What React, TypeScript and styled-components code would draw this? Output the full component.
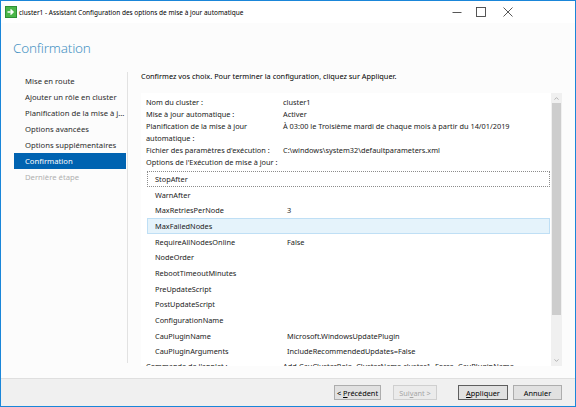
import React from 'react';
import styled, { createGlobalStyle } from 'styled-components';

const GlobalStyle = createGlobalStyle`
  html, body {
    margin: 0;
    padding: 0;
    width: 576px;
    height: 407px;
    overflow: hidden;
    background: #fff;
  }
  body {
    font-family: "Noto Sans", "Liberation Sans", sans-serif;
    font-size: 7.35px;
    color: #1a1a1a;
  }
`;

const Window = styled.div`
  width: 576px;
  height: 407px;
  box-sizing: border-box;
  border: 1px solid #1a86d9;
  background: #fcfcfc;
  display: flex;
  flex-direction: column;
`;

const TitleBar = styled.div`
  height: 22px;
  flex-shrink: 0;
  background: #fff;
  display: flex;
  align-items: center;
  padding-left: 4px;
`;

const TitleText = styled.span`
  margin-left: 2px;
  flex: 1;
  font-size: 6.5px;
  color: #000;
  white-space: nowrap;
`;

const WindowControls = styled.div`
  display: flex;
  height: 100%;
  margin-right: 55px;
`;

const ControlButton = styled.div<{ $gap?: number }>`
  width: 24px;
  height: 100%;
  margin-left: ${(p) => p.$gap ?? 0}px;
  display: flex;
  align-items: center;
  justify-content: center;
`;

const Header = styled.div`
  height: 44px;
  flex-shrink: 0;
  box-sizing: border-box;
  padding: 6px 0 0 12px;
  display: flex;
  align-items: center;
`;

const PageTitle = styled.h1`
  margin: 0;
  font-size: 13.5px;
  font-weight: 300;
  color: #4a94c4;
  letter-spacing: -0.2px;
`;

const Main = styled.div`
  flex: 1;
  display: flex;
  min-height: 0;
`;

const Nav = styled.nav`
  width: 127px;
  flex-shrink: 0;
  box-sizing: border-box;
  margin: 5px 0 15px 0;
  padding: 1px 0 0 13px;
  border-right: 1px solid #e2e2e2;
`;

const NavItem = styled.div<{ $state?: 'active' | 'disabled' }>`
  height: 16px;
  line-height: 16px;
  margin-right: 1px;
  padding-left: 11px;
  font-size: 7.7px;
  white-space: nowrap;
  overflow: hidden;
  text-overflow: ellipsis;
  background: ${(p) => (p.$state === 'active' ? '#0063b1' : 'transparent')};
  color: ${(p) =>
    p.$state === 'active' ? '#fff' : p.$state === 'disabled' ? '#b0b0b0' : '#2b2b2b'};
`;

const Content = styled.section`
  flex: 1;
  min-width: 0;
  display: flex;
  flex-direction: column;
  padding: 4px 13px 12px 13px;
`;

const Intro = styled.p`
  margin: 0;
  line-height: 10px;
  color: #000;
`;

const ListFrame = styled.div`
  flex: 1;
  min-height: 0;
  margin-top: 12px;
  display: flex;
  background: #fff;
`;

const ListScroll = styled.div`
  flex: 1;
  min-width: 0;
  overflow: hidden;
  padding: 3px 0 0 5px;
`;

const SummaryRow = styled.div<{ $gap?: number }>`
  display: flex;
  line-height: 12px;
  margin-top: ${(p) => p.$gap ?? 0}px;
  white-space: nowrap;
`;

const SummaryLabel = styled.div`
  width: 137px;
  flex-shrink: 0;
`;

const SummaryValue = styled.div`
  flex: 1;
  min-width: 0;
`;

const OptionsList = styled.div`
  margin: 3px 1px 0 1px;
  background: #fff;
`;

const OptionRow = styled.div<{ $variant?: 'focus' | 'selected' }>`
  height: 15.7px;
  box-sizing: border-box;
  display: flex;
  align-items: center;
  padding-left: 7px;
  white-space: nowrap;
  border: 1px ${(p) => (p.$variant === 'focus' ? 'dotted' : 'solid')};
  border-color: ${(p) =>
    p.$variant === 'focus' ? '#8c8c8c' : p.$variant === 'selected' ? '#bfdff5' : 'transparent'};
  background: ${(p) => (p.$variant === 'selected' ? '#e5f3fb' : 'transparent')};
`;

const OptionName = styled.div`
  width: 132px;
  flex-shrink: 0;
`;

const OptionValue = styled.div``;

const ScrollBar = styled.div`
  width: 11px;
  flex-shrink: 0;
  display: flex;
  flex-direction: column;
  background: #f0f0f0;
`;

const ScrollArrow = styled.div<{ $h: number }>`
  height: ${(p) => p.$h}px;
  flex-shrink: 0;
  display: flex;
  align-items: center;
  justify-content: center;
`;

const ScrollThumb = styled.div`
  height: 212px;
  flex-shrink: 0;
  margin: 0 1px;
  background: #cdcdcd;
`;

const ScrollTrack = styled.div`
  flex: 1;
`;

const Footer = styled.footer`
  height: 28px;
  flex-shrink: 0;
  box-sizing: border-box;
  border-top: 1px solid #dfdfdf;
  background: #f0f0f0;
  display: flex;
  justify-content: flex-end;
  align-items: flex-start;
  padding: 6px 13px 0 0;
`;

const Button = styled.button<{ $w: number; $gap: number; $default?: boolean }>`
  width: ${(p) => p.$w}px;
  height: 15px;
  margin-left: ${(p) => p.$gap}px;
  padding: 0;
  box-sizing: border-box;
  font-family: inherit;
  font-size: 7.35px;
  color: #000;
  background: #e1e1e1;
  border: 1px solid ${(p) => (p.$default ? '#5f5f5f' : '#adadad')};
  border-radius: 0;
  &:disabled {
    color: #a6a6a6;
    background: #ebebeb;
    border-color: #cfcfcf;
  }
`;

const AppIcon = () => (
  <svg width="12" height="12" viewBox="0 0 12 12">
    <rect x="0.5" y="0.5" width="11" height="11" fill="#4cb649" stroke="#2f8f34" />
    <path d="M2.5 6h5M5.5 3.5L8 6l-2.5 2.5" stroke="#fff" strokeWidth="1.5" fill="none" />
  </svg>
);

const Chevron = ({ up }: { up?: boolean }) => (
  <svg width="5" height="3" viewBox="0 0 5 3">
    <path d={up ? 'M0.5 2.6L2.5 0.6L4.5 2.6' : 'M0.5 0.4L2.5 2.4L4.5 0.4'} stroke="#a3a3a3" strokeWidth="0.8" fill="none" />
  </svg>
);

const navItems: { label: string; state?: 'active' | 'disabled' }[] = [
  { label: 'Mise en route' },
  { label: 'Ajouter un rôle en cluster' },
  { label: 'Planification de la mise à jour automatique' },
  { label: 'Options avancées' },
  { label: 'Options supplémentaires' },
  { label: 'Confirmation', state: 'active' },
  { label: 'Dernière étape', state: 'disabled' },
];

const options: { name: string; value: string; variant?: 'focus' | 'selected' }[] = [
  { name: 'StopAfter', value: '', variant: 'focus' },
  { name: 'WarnAfter', value: '' },
  { name: 'MaxRetriesPerNode', value: '3' },
  { name: 'MaxFailedNodes', value: '', variant: 'selected' },
  { name: 'RequireAllNodesOnline', value: 'False' },
  { name: 'NodeOrder', value: '' },
  { name: 'RebootTimeoutMinutes', value: '' },
  { name: 'PreUpdateScript', value: '' },
  { name: 'PostUpdateScript', value: '' },
  { name: 'ConfigurationName', value: '' },
  { name: 'CauPluginName', value: 'Microsoft.WindowsUpdatePlugin' },
  { name: 'CauPluginArguments', value: 'IncludeRecommendedUpdates=False' },
];

export default function App() {
  return (
    <>
      <GlobalStyle />
      <Window>
        <TitleBar>
          <AppIcon />
          <TitleText>cluster1 - Assistant Configuration des options de mise à jour automatique</TitleText>
          <WindowControls>
            <ControlButton>
              <svg width="10" height="10" viewBox="0 0 10 10">
                <path d="M0.5 5.5h9" stroke="#444" strokeWidth="0.9" />
              </svg>
            </ControlButton>
            <ControlButton>
              <svg width="10" height="10" viewBox="0 0 10 10">
                <rect x="0.5" y="0.5" width="9" height="9" stroke="#444" strokeWidth="0.9" fill="none" />
              </svg>
            </ControlButton>
            <ControlButton $gap={3}>
              <svg width="10" height="10" viewBox="0 0 10 10">
                <path d="M0.5 0.5l9 9M9.5 0.5l-9 9" stroke="#444" strokeWidth="0.9" />
              </svg>
            </ControlButton>
          </WindowControls>
        </TitleBar>

        <Header>
          <PageTitle>Confirmation</PageTitle>
        </Header>

        <Main>
          <Nav>
            {navItems.map((item) => (
              <NavItem key={item.label} $state={item.state}>
                {item.label}
              </NavItem>
            ))}
          </Nav>

          <Content>
            <Intro>Confirmez vos choix. Pour terminer la configuration, cliquez sur Appliquer.</Intro>
            <ListFrame>
              <ListScroll>
                <SummaryRow>
                  <SummaryLabel>Nom du cluster :</SummaryLabel>
                  <SummaryValue>cluster1</SummaryValue>
                </SummaryRow>
                <SummaryRow>
                  <SummaryLabel>Mise à jour automatique :</SummaryLabel>
                  <SummaryValue>Activer</SummaryValue>
                </SummaryRow>
                <SummaryRow>
                  <SummaryLabel>
                    Planification de la mise à jour
                    <br />
                    automatique :
                  </SummaryLabel>
                  <SummaryValue>À 03:00 le Troisième mardi de chaque mois à partir du 14/01/2019</SummaryValue>
                </SummaryRow>
                <SummaryRow>
                  <SummaryLabel>Fichier des paramètres d'exécution :</SummaryLabel>
                  <SummaryValue>C:\windows\system32\defaultparameters.xml</SummaryValue>
                </SummaryRow>
                <SummaryRow>
                  <SummaryLabel>Options de l'Exécution de mise à jour :</SummaryLabel>
                </SummaryRow>
                <OptionsList>
                  {options.map((o) => (
                    <OptionRow key={o.name} $variant={o.variant}>
                      <OptionName>{o.name}</OptionName>
                      <OptionValue>{o.value}</OptionValue>
                    </OptionRow>
                  ))}
                </OptionsList>
                <SummaryRow $gap={1.2}>
                  <SummaryLabel>Commande de l'applet :</SummaryLabel>
                  <SummaryValue>Add-CauClusterRole -ClusterName cluster1 -Force -CauPluginName</SummaryValue>
                </SummaryRow>
              </ListScroll>
              <ScrollBar>
                <ScrollArrow $h={10}>
                  <Chevron up />
                </ScrollArrow>
                <ScrollThumb />
                <ScrollTrack />
                <ScrollArrow $h={11}>
                  <Chevron />
                </ScrollArrow>
              </ScrollBar>
            </ListFrame>
          </Content>
        </Main>

        <Footer>
          <Button $w={47} $gap={0}>
            &lt; <u>P</u>récédent
          </Button>
          <Button $w={44} $gap={12} disabled>
            Sui<u>v</u>ant &gt;
          </Button>
          <Button $w={50} $gap={21} $default>
            <u>A</u>ppliquer
          </Button>
          <Button $w={49} $gap={5}>
            Annuler
          </Button>
        </Footer>
      </Window>
    </>
  );
}
